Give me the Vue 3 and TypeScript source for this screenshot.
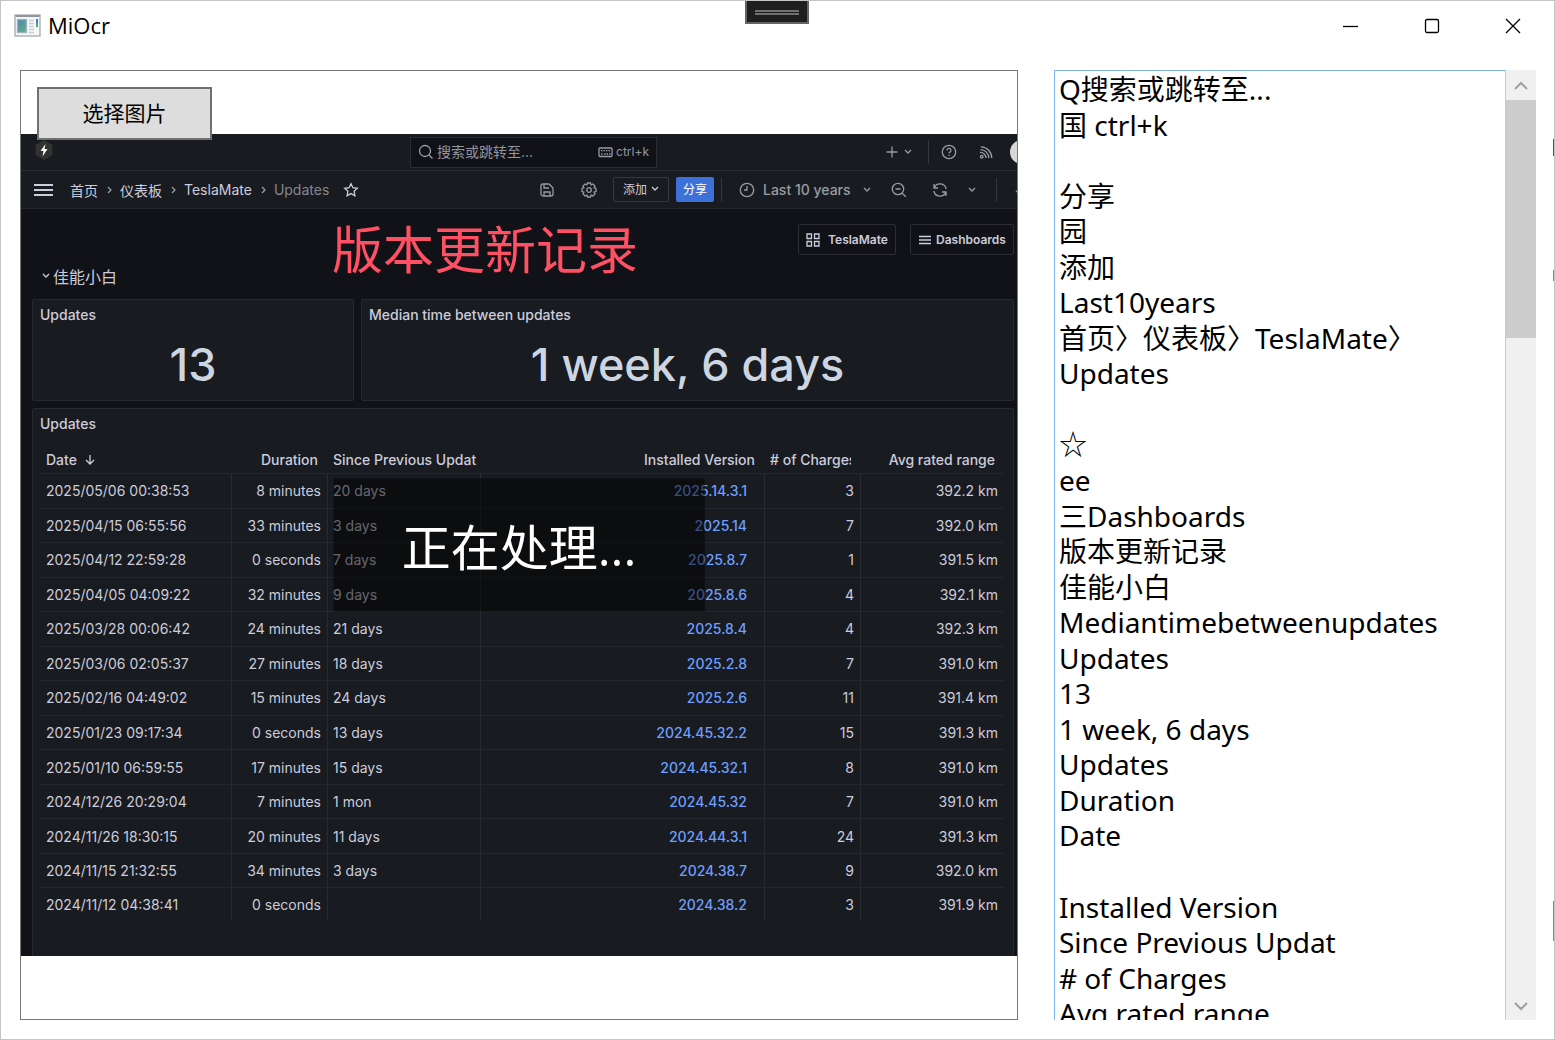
<script setup lang="ts">
import { ref } from 'vue'

interface UpdateRow {
  date: string
  duration: string
  since: string
  version: string
  charges: number
  range: string
}

const rows: UpdateRow[] = [
  { date: '2025/05/06 00:38:53', duration: '8 minutes', since: '20 days', version: '2025.14.3.1', charges: 3, range: '392.2 km' },
  { date: '2025/04/15 06:55:56', duration: '33 minutes', since: '3 days', version: '2025.14', charges: 7, range: '392.0 km' },
  { date: '2025/04/12 22:59:28', duration: '0 seconds', since: '7 days', version: '2025.8.7', charges: 1, range: '391.5 km' },
  { date: '2025/04/05 04:09:22', duration: '32 minutes', since: '9 days', version: '2025.8.6', charges: 4, range: '392.1 km' },
  { date: '2025/03/28 00:06:42', duration: '24 minutes', since: '21 days', version: '2025.8.4', charges: 4, range: '392.3 km' },
  { date: '2025/03/06 02:05:37', duration: '27 minutes', since: '18 days', version: '2025.2.8', charges: 7, range: '391.0 km' },
  { date: '2025/02/16 04:49:02', duration: '15 minutes', since: '24 days', version: '2025.2.6', charges: 11, range: '391.4 km' },
  { date: '2025/01/23 09:17:34', duration: '0 seconds', since: '13 days', version: '2024.45.32.2', charges: 15, range: '391.3 km' },
  { date: '2025/01/10 06:59:55', duration: '17 minutes', since: '15 days', version: '2024.45.32.1', charges: 8, range: '391.0 km' },
  { date: '2024/12/26 20:29:04', duration: '7 minutes', since: '1 mon', version: '2024.45.32', charges: 7, range: '391.0 km' },
  { date: '2024/11/26 18:30:15', duration: '20 minutes', since: '11 days', version: '2024.44.3.1', charges: 24, range: '391.3 km' },
  { date: '2024/11/15 21:32:55', duration: '34 minutes', since: '3 days', version: '2024.38.7', charges: 9, range: '392.0 km' },
  { date: '2024/11/12 04:38:41', duration: '0 seconds', since: '', version: '2024.38.2', charges: 3, range: '391.9 km' },
]

const resultText = ref(
  [
    'Q搜索或跳转至...',
    '国 ctrl+k',
    '',
    '分享',
    '园',
    '添加',
    'Last10years',
    '首页〉仪表板〉TeslaMate〉',
    'Updates',
    '',
    '☆',
    'ee',
    '三Dashboards',
    '版本更新记录',
    '佳能小白',
    'Mediantimebetweenupdates',
    'Updates',
    '13',
    '1 week, 6 days',
    'Updates',
    'Duration',
    'Date',
    '',
    'Installed Version',
    'Since Previous Updat',
    '# of Charges',
    'Avg rated range',
  ].join('\n'),
)
</script>

<template>
  <div class="window">
    <div class="debug-grip"><span></span></div>
    <span class="edge edge-blue"></span>
    <span class="edge edge-short"></span>
    <span class="edge edge-long"></span>

    <header class="titlebar">
      <svg class="app-icon" width="28" height="24" viewBox="0 0 28 24">
        <defs>
          <linearGradient id="pane" x1="0" y1="0" x2="1" y2="1">
            <stop offset="0" stop-color="#4f86b5" />
            <stop offset="1" stop-color="#62b57b" />
          </linearGradient>
        </defs>
        <rect x="1" y="1" width="25" height="21" fill="#f6f7f8" stroke="#a4a9ae" />
        <path d="M1.5 2h24" stroke="#8e979f" stroke-width="2" />
        <rect x="3.500" y="5.500" width="9" height="13" fill="url(#pane)" stroke="#9fb1c0" />
        <path d="M15 6.500h5M15 9.500h5M15 12.500h5M15 15.500h5M15 18.500h5" stroke="#c9cdd1" />
        <path d="M23 5v4" stroke="#3c7fc0" stroke-width="2" />
        <path d="M23 9v4" stroke="#58a869" stroke-width="2" />
      </svg>
      <span class="app-name">MiOcr</span>
      <div class="controls">
        <button type="button" aria-label="最小化">
          <svg width="16" height="16" viewBox="0 0 16 16"><path d="M0 8.500h15" /></svg>
        </button>
        <button type="button" aria-label="最大化">
          <svg width="16" height="16" viewBox="0 0 16 16"><rect x="1.500" y="1.500" width="13" height="13" rx="1.500" /></svg>
        </button>
        <button type="button" aria-label="关闭">
          <svg width="16" height="16" viewBox="0 0 16 16"><path d="M1 1l14 14M15 1L1 15" /></svg>
        </button>
      </div>
    </header>

    <main class="content">
      <section class="viewer">
        <button type="button" class="pick">选择图片</button>

        <div class="shot">
          <div class="topbar">
            <div class="brand">
              <svg width="18" height="20" viewBox="0 0 18 20">
                <path d="M9 0l8.500 5v10L9 20l-8.500-5V5z" fill="#323232" />
                <path d="M10.500 4L5.500 11h3l-1 5.500 5-7.500h-3z" fill="#fff" />
              </svg>
            </div>
            <div class="search">
              <svg class="ic" width="16" height="16" viewBox="0 0 16 16"><circle cx="7" cy="7" r="5.500" /><path d="M11 11l3.500 3.500" /></svg>
              <span class="search-text">搜索或跳转至...</span>
              <svg class="ic" width="15" height="11" viewBox="0 0 15 11">
                <rect x="1" y="1" width="13" height="8.500" rx="1" />
                <path d="M3 3.700h9M3 7h1.500M6 7h4M11 7h1.500" stroke-dasharray="1.500 1" />
              </svg>
              <span class="keys">ctrl+k</span>
            </div>
            <div class="top-actions">
              <svg class="ic" width="12" height="12" viewBox="0 0 12 12"><path d="M6 .5v11M.5 6h11" /></svg>
              <svg class="ic chev" width="8" height="6" viewBox="0 0 8 6"><path d="M1 1l3 3 3-3" /></svg>
              <i class="sep"></i>
              <svg class="ic help" width="16" height="16" viewBox="0 0 16 16">
                <circle cx="8" cy="8" r="6.700" />
                <path d="M6 6.500a2 2 0 1 1 3 1.600c-.7.400-1 .6-1 1.200M8 10.800v1.200" />
              </svg>
              <svg class="ic rss" width="16" height="16" viewBox="0 0 16 16">
                <circle cx="3.700" cy="12.700" r="1.300" />
                <path d="M2 8.500a5.500 5.500 0 0 1 6 5.500M2.500 5.600a8.500 8.500 0 0 1 8.300 8.400M3 2.800A11 11 0 0 1 13.700 14" />
              </svg>
              <span class="avatar"></span>
            </div>
          </div>

          <div class="toolbar">
            <nav class="crumbs">
              <svg class="burger" width="20" height="12" viewBox="0 0 20 12"><path d="M0 1h19M0 6h19M0 11h19" /></svg>
              <a href="#home">首页</a>
              <svg class="ic arrow" width="5" height="8" viewBox="0 0 5 8"><path d="M1 1l3 3-3 3" /></svg>
              <a href="#dashboards">仪表板</a>
              <svg class="ic arrow" width="5" height="8" viewBox="0 0 5 8"><path d="M1 1l3 3-3 3" /></svg>
              <a href="#teslamate">TeslaMate</a>
              <svg class="ic arrow" width="5" height="8" viewBox="0 0 5 8"><path d="M1 1l3 3-3 3" /></svg>
              <span class="current">Updates</span>
              <svg class="star" width="16" height="16" viewBox="0 0 16 16"><path d="M8 1.700l1.900 4 4.400.6-3.200 3 .8 4.400L8 11.600l-3.900 2.100.8-4.400-3.200-3 4.400-.6z" /></svg>
            </nav>
            <div class="tools">
              <svg class="ic save" width="14" height="14" viewBox="0 0 14 14">
                <path d="M1 3a2 2 0 0 1 2-2h6l4 4v6a2 2 0 0 1-2 2H3a2 2 0 0 1-2-2zM4 1.500V5h5M4 13V9h6v4" />
              </svg>
              <svg class="ic gear" width="16" height="16" viewBox="0 0 16 16">
                <path d="M6.500 1h3l.6 1.900 1.800-.9 2.100 2.100-.9 1.800 1.900.6v3l-1.900.6.9 1.800-2.100 2.100-1.800-.9-.6 1.900h-3l-.6-1.900-1.800.9L2 11.900l.9-1.800L1 9.500v-3l1.900-.6L2 4.100 4.100 2l1.800.9z" />
                <circle cx="8" cy="8" r="2.300" />
              </svg>
              <button type="button" class="add">添加
                <svg width="8" height="6" viewBox="0 0 8 6"><path d="M1 1l3 3 3-3" /></svg>
              </button>
              <button type="button" class="share">分享</button>
              <i class="sep"></i>
              <svg class="ic clock" width="16" height="16" viewBox="0 0 16 16"><circle cx="8" cy="8" r="6.700" /><path d="M8 4v4H5" /></svg>
              <span class="range">Last 10 years</span>
              <svg class="ic" width="8" height="6" viewBox="0 0 8 6"><path d="M1 1l3 3 3-3" /></svg>
              <svg class="ic zoom" width="16" height="16" viewBox="0 0 16 16"><circle cx="7" cy="7" r="5.700" /><path d="M11.200 11.200l3.600 3.600M4.500 7h5" /></svg>
              <svg class="ic refresh" width="16" height="16" viewBox="0 0 16 16">
                <path d="M2 2v4h4M2.200 5.800A6.300 6.300 0 0 1 14.200 7M14 14v-4h-4M13.800 10.200A6.300 6.300 0 0 1 1.800 9" />
              </svg>
              <svg class="ic" width="8" height="6" viewBox="0 0 8 6"><path d="M1 1l3 3 3-3" /></svg>
              <i class="sep last"></i>
              <svg class="ic" width="10" height="6" viewBox="0 0 10 6"><path d="M1 5l4-4 4 4" /></svg>
            </div>
          </div>

          <div class="board">
            <div class="board-head">
              <h1>版本更新记录</h1>
              <div class="links">
                <a href="#teslamate">
                  <svg width="14" height="14" viewBox="0 0 14 14"><path d="M1 1h4.500v4.500H1zM8.500 1H13v4.500H8.500zM1 8.500h4.500V13H1zM8.500 8.500H13V13H8.500z" /></svg>
                  TeslaMate
                </a>
                <a href="#dashboards">
                  <svg width="14" height="10" viewBox="0 0 14 10"><path d="M1 1.500h12M1 5h12M1 8.500h12" /></svg>
                  Dashboards
                </a>
              </div>
            </div>
            <h2>
              <svg width="8" height="6" viewBox="0 0 8 6"><path d="M1 1l3 3 3-3" /></svg>
              佳能小白
            </h2>
            <div class="stats">
              <section class="panel">
                <h3>Updates</h3>
                <p>13</p>
              </section>
              <section class="panel">
                <h3>Median time between updates</h3>
                <p>1 week, 6 days</p>
              </section>
            </div>
            <section class="panel list">
              <h3>Updates</h3>
              <table>
                <colgroup>
                  <col class="c-date" /><col class="c-dur" /><col class="c-since" /><col class="c-ver" /><col class="c-chg" /><col class="c-avg" />
                </colgroup>
                <thead>
                  <tr>
                    <th class="left">Date
                      <svg width="10" height="10" viewBox="0 0 10 10"><path d="M5 0v9M1 5l4 4 4-4" /></svg>
                    </th>
                    <th>Duration</th>
                    <th class="left">Since Previous Updat</th>
                    <th>Installed Version</th>
                    <th class="left"><div class="clip"># of Charges</div></th>
                    <th>Avg rated range</th>
                  </tr>
                </thead>
                <tbody>
                  <tr v-for="row in rows" :key="row.date">
                    <td class="left">{{ row.date }}</td>
                    <td>{{ row.duration }}</td>
                    <td class="left">{{ row.since }}</td>
                    <td class="version"><a href="#release">{{ row.version }}</a></td>
                    <td>{{ row.charges }}</td>
                    <td>{{ row.range }}</td>
                  </tr>
                </tbody>
              </table>
            </section>
          </div>
        </div>

        <div class="busy" role="status">正在处理...</div>
      </section>

      <section class="result">
        <textarea v-model="resultText" aria-label="识别结果" spellcheck="false"></textarea>
        <div class="scrollbar">
          <button type="button" aria-label="向上滚动">
            <svg width="14" height="10" viewBox="0 0 14 10"><path d="M1 8l6-6 6 6" /></svg>
          </button>
          <div class="track"><div class="thumb"></div></div>
          <button type="button" aria-label="向下滚动">
            <svg width="14" height="10" viewBox="0 0 14 10"><path d="M1 2l6 6 6-6" /></svg>
          </button>
        </div>
      </section>
    </main>
  </div>
</template>

<style>
body {
  background: #fff;
}
</style>

<style scoped>
* {
  box-sizing: border-box;
}
.window {
  position: relative;
  display: flex;
  flex-direction: column;
  height: 100vh;
  border: 1px solid #c4c4c4;
  background: #fff;
  color: #000;
  font-family: "Open Sans", "Noto Sans CJK SC", sans-serif;
  overflow: hidden;
}
button {
  flex: none;
  margin: 0;
  padding: 0;
  border: 0;
  background: none;
  font: inherit;
  color: inherit;
}
a {
  color: inherit;
  text-decoration: none;
}
svg {
  flex: none;
  fill: none;
  stroke-width: 1.3;
}
h1, h2, h3, p {
  margin: 0;
  font-weight: 400;
}

/* window chrome */
.debug-grip {
  position: absolute;
  top: -1px;
  left: 50%;
  width: 64px;
  height: 24px;
  margin-left: -33px;
  padding: 9px 8px;
  border: 2px solid #646464;
  border-top-width: 1px;
  background: #1f1f1f;
}
.debug-grip span {
  display: block;
  height: 5px;
  border: 2px solid #707070;
  border-width: 2px 0;
}
.edge {
  position: absolute;
  right: -1px;
  width: 2px;
  background: #858585;
}
.edge-blue {
  top: 138px;
  height: 17px;
  background: #3552a0;
}
.edge-short {
  top: 269px;
  height: 11px;
}
.edge-long {
  top: 900px;
  height: 40px;
}
.titlebar {
  display: flex;
  flex: none;
  align-items: center;
  height: 50px;
  padding: 0 1px 0 13px;
}
.app-name {
  margin-left: 6px;
  padding-bottom: 2px;
  font-size: 22px;
}
.controls {
  display: flex;
  align-self: stretch;
  margin-left: auto;
}
.controls button {
  display: flex;
  align-items: center;
  justify-content: center;
  width: 81px;
}
.controls svg {
  stroke: #000;
}

.content {
  display: grid;
  flex: 1;
  grid-template-columns: minmax(0, 998fr) minmax(0, 482fr);
  gap: 36px;
  min-height: 0;
  padding: 19px 18px 19px 19px;
}

/* image viewer */
.viewer {
  position: relative;
  display: flex;
  flex-direction: column;
  justify-content: center;
  border: 1px solid #787878;
  overflow: hidden;
}
.pick {
  position: absolute;
  z-index: 1;
  top: 16px;
  left: 16px;
  width: 175px;
  height: 53px;
  padding-bottom: 4px;
  border: 2px solid #707070;
  background: #ddd;
  font-size: 21px;
}
.busy {
  position: absolute;
  top: 50%;
  left: 50%;
  padding: 32px 68px 28px;
  background: rgba(0, 0, 0, 0.5);
  color: #fff;
  font-size: 49px;
  line-height: 73px;
  white-space: nowrap;
  transform: translate(-50%, -50%);
}

.shot {
  flex: none;
  height: 822px;
  background: #111217;
  color: #ccccdc;
  font-family: Inter, "Noto Sans CJK SC", sans-serif;
  font-size: 14px;
  overflow: hidden;
}
.ic {
  stroke: #9a9ba4;
}
.topbar {
  display: grid;
  grid-template-columns: minmax(0, 389fr) minmax(0, 247fr) minmax(0, 360fr);
  align-items: center;
  height: 37px;
  border-bottom: 1px solid #292b30;
  background: #181b1f;
}
.brand {
  height: 24px;
  padding-left: 14px;
}
.search {
  display: flex;
  align-items: center;
  height: 31px;
  padding: 0 7px;
  border: 1px solid #2b2d32;
  background: #111217;
  color: #94959f;
}
.search-text {
  flex: 1;
  margin-left: 3px;
  padding-bottom: 2px;
  white-space: nowrap;
}
.keys {
  margin-left: 3px;
  padding-bottom: 2px;
  font-size: 12px;
}
.top-actions {
  display: flex;
  align-items: center;
  padding-left: 229px;
}
.chev {
  margin-left: 6px;
}
.sep {
  flex: none;
  width: 1px;
  height: 24px;
  background: #35373d;
}
.top-actions .sep {
  margin-left: 16px;
}
.help {
  margin-left: 12px;
}
.rss {
  margin-left: 21px;
}
.avatar {
  flex: none;
  width: 24px;
  height: 24px;
  margin-left: 16px;
  border-radius: 50%;
  background: #d8d8d8;
}
.toolbar {
  display: grid;
  grid-template-columns: minmax(0, 519fr) minmax(0, 477fr);
  align-items: center;
  height: 38px;
  border-bottom: 1px solid #25272c;
  background: #181b1f;
}
.crumbs,
.tools {
  display: flex;
  align-items: center;
  white-space: nowrap;
}
.crumbs {
  padding-left: 13px;
}
.burger {
  margin-right: 16px;
  stroke: #ccccdc;
  stroke-width: 2;
}
.arrow {
  margin: 0 8px 0 9px;
}
.current {
  color: #85868f;
}
.star {
  margin-left: 14px;
  stroke: #ccccdc;
}
.gear {
  margin-left: 27px;
}
.add,
.share {
  height: 25px;
  padding-bottom: 2px;
  border-radius: 2px;
  font-size: 12px;
}
.add {
  display: flex;
  align-items: center;
  justify-content: center;
  gap: 4px;
  width: 56px;
  margin-left: 16px;
  border: 1px solid #36383e;
}
.add svg {
  stroke: #ccccdc;
}
.share {
  width: 38px;
  margin-left: 7px;
  background: #3d71d9;
  color: #fff;
}
.tools .sep {
  margin-left: 7px;
}
.clock {
  margin-left: 17px;
}
.range {
  margin: 0 12px 0 8px;
  color: #9a9ba4;
  font-weight: 500;
}
.zoom {
  margin-left: 20px;
}
.refresh {
  margin: 0 20px 0 25px;
}
.tools .last {
  margin: 0 18px 0 20px;
}

.board {
  padding: 15px 3px 0 11px;
}
.board-head {
  display: grid;
  grid-template-columns: 300fr 466fr 216fr;
}
h1 {
  grid-column: 2;
  color: #ff5064;
  font-size: 51px;
  line-height: 54px;
  white-space: nowrap;
}
.links {
  display: flex;
  gap: 14px;
  height: 31px;
}
.links a {
  display: flex;
  align-items: center;
  justify-content: center;
  gap: 8px;
  width: 98px;
  border: 1px solid #2c2e34;
  border-radius: 2px;
  font-size: 12px;
  font-weight: 600;
}
.links a + a {
  gap: 4px;
  width: 104px;
}
.links svg,
h2 svg,
th svg {
  stroke: #ccccdc;
}
h2 {
  display: flex;
  align-items: center;
  gap: 3px;
  height: 24px;
  margin: -14px 0 11px;
  padding-left: 10px;
  font-size: 16px;
}
.stats {
  display: grid;
  grid-template-columns: 322fr 653fr;
  gap: 7px;
}
.panel {
  border: 1px solid #27292e;
  border-radius: 2px;
  background: #181b1f;
}
.stats .panel {
  height: 102px;
}
h3 {
  padding: 5px 7px 0;
  font-weight: 500;
  font-size: 14px;
  line-height: 20px;
}
.panel p {
  margin-top: 12px;
  color: #ccd5e0;
  font-size: 45px;
  font-weight: 500;
  line-height: 56px;
  text-align: center;
}
.list {
  height: 560px;
  margin-top: 7px;
}
table {
  width: calc(100% - 16px);
  height: 475px;
  margin: 12px 8px 0 7px;
  border-collapse: separate;
  border-spacing: 0;
  table-layout: fixed;
}
.c-date { width: 191px; }
.c-dur { width: 96px; }
.c-since { width: 153px; }
.c-ver { width: 284px; }
.c-chg { width: 96px; }
th,
td {
  padding: 0 6px;
  border-bottom: 1px solid #25272c;
  text-align: right;
  white-space: nowrap;
}
th {
  height: 28px;
  padding: 0 9px;
  font-weight: 500;
}
th svg {
  margin-left: 4px;
}
td + td {
  border-left: 1px solid #292b31;
}
tbody tr:last-child td {
  border-bottom: 0;
}
th.left {
  padding: 0 9px 0 6px;
}
td.left,
th.left {
  text-align: left;
}
td + td.left {
  padding-left: 5px;
}
.clip {
  overflow: hidden;
}
td.version {
  padding-right: 17px;
  color: #6e9fff;
  font-weight: 500;
}

/* recognised text */
.result {
  display: flex;
  min-height: 0;
}
textarea {
  flex: 1;
  min-width: 0;
  margin: 0;
  padding: 1px 4px;
  border: 1px solid #7eb4ea;
  border-right-color: #a9d1f5;
  border-bottom: 0;
  outline: 0;
  background: #fff;
  color: #000;
  font: 28px/1.27 "Noto Sans", "Noto Sans CJK SC", sans-serif;
  resize: none;
  overflow: hidden;
}
.scrollbar {
  display: flex;
  flex-direction: column;
  width: 30px;
  background: #f0f0f0;
}
.scrollbar button {
  height: 30px;
}
.scrollbar svg {
  stroke: #a0a0a0;
  stroke-width: 2;
}
.track {
  flex: 1;
}
.thumb {
  height: 238px;
  background: #cdcdcd;
}
</style>
